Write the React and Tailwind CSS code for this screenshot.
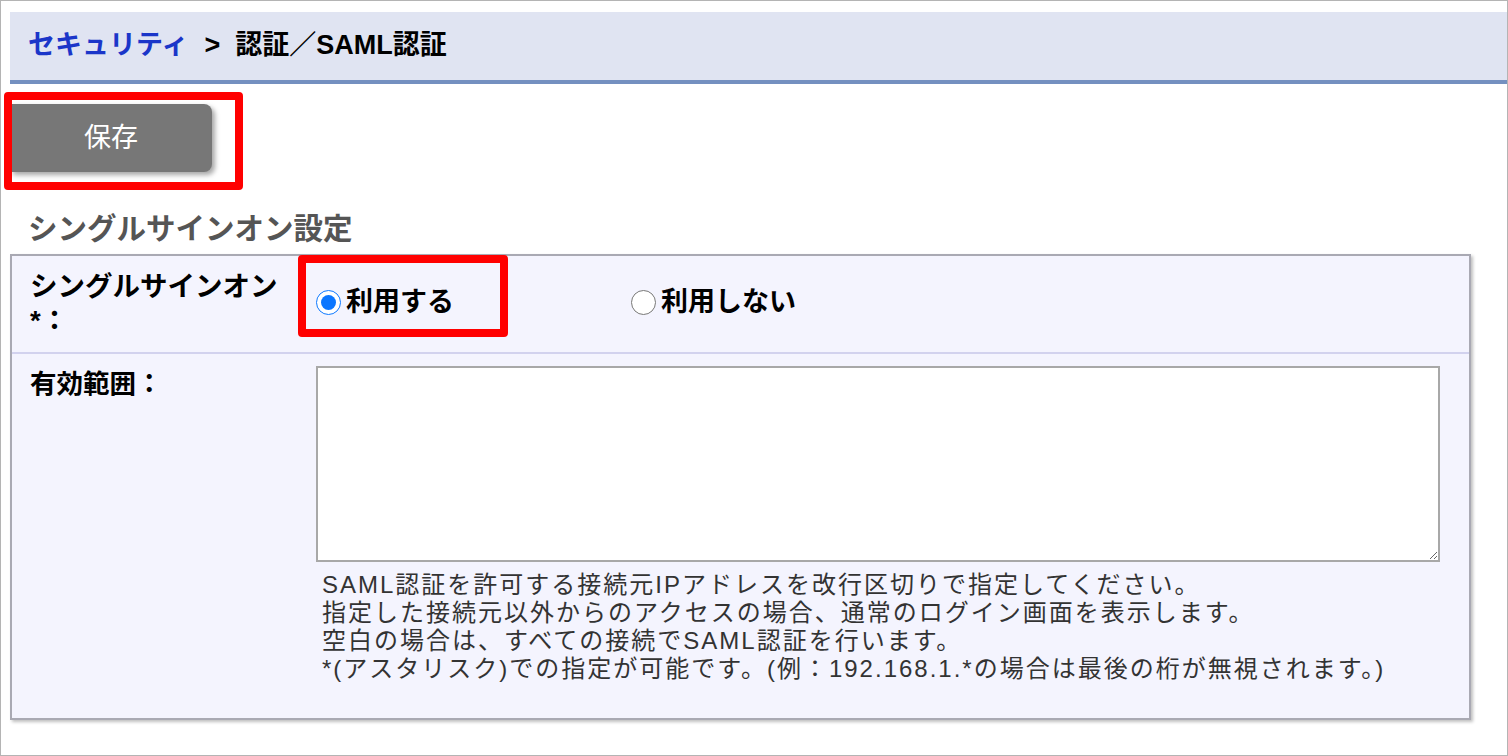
import { useState } from 'react'

const jp = { fontFamily: '"Liberation Sans", "Noto Sans CJK JP", sans-serif' }

export default function App() {
  const [sso, setSso] = useState('on')
  const [range, setRange] = useState('')

  return (
    <div style={jp} className="h-[756px] w-[1508px] overflow-hidden border border-[#b4b4b4] bg-white pl-[9px] pt-[11px] text-black">
      {/* breadcrumb bar */}
      <div className="flex h-[72px] items-center border-b-4 border-[#7490c0] bg-[#e0e4f2] pb-[2px] pl-[18px] text-[27px] font-bold">
        <a href="#" className="text-[#1b36c9]">セキュリティ</a>
        <span className="ml-[16px]">&gt;</span>
        <span className="ml-[15px]">認証／SAML認証</span>
      </div>

      {/* save */}
      <div className="relative mt-[20px] h-[68px] w-[202px]">
        <button className="h-full w-full rounded-r-lg bg-[#777777] text-[27px] text-white shadow-[3px_3px_5px_rgba(0,0,0,0.35)]">
          保存
        </button>
        <div className="pointer-events-none absolute -left-[6px] -top-[12px] h-[98px] w-[239px] rounded-[4px] border-[8px] border-[#ff0000]" />
      </div>

      <h2 className="mt-[37px] pl-[18px] text-[29.5px] font-bold leading-[40px] text-[#555555]">シングルサインオン設定</h2>

      {/* settings table */}
      <div className="mt-[5px] w-[1461px] border-2 border-[#a9a9b3] bg-[#f4f4fe] shadow-[2px_2px_3px_rgba(0,0,0,0.25)]">
        <div className="flex h-[98px] border-b-2 border-[#d2d2ee]">
          <div className="w-[304px] shrink-0 pl-[18px] pt-[14px] text-[27.5px] font-bold leading-[34px]">
            シングルサインオン
            <br />
            *：
          </div>
          <div className="flex items-start pt-[26px]">
            <label className="relative flex w-[315px] items-center text-[27px] font-bold">
              <input
                type="radio"
                name="sso"
                checked={sso === 'on'}
                onChange={() => setSso('on')}
                className="m-0 mr-[5px] h-[25px] w-[25px] accent-[#0b76ff]"
              />
              利用する
              <span className="pointer-events-none absolute -left-[18px] -top-[27px] h-[82px] w-[210px] rounded-[4px] border-[8px] border-[#ff0000]" />
            </label>
            <label className="flex items-center text-[27px] font-bold">
              <input
                type="radio"
                name="sso"
                checked={sso === 'off'}
                onChange={() => setSso('off')}
                className="m-0 mr-[5px] h-[25px] w-[25px]"
              />
              利用しない
            </label>
          </div>
        </div>

        <div className="flex h-[364px]">
          <div className="w-[304px] shrink-0 pl-[18px] pt-[13px] text-[26.5px] font-bold leading-[34px]">有効範囲：</div>
          <div className="pt-[12px]">
            <textarea
              value={range}
              onChange={e => setRange(e.target.value)}
              className="block h-[196px] w-[1124px] border-2 border-[#a8a8a8] bg-white p-2 text-[22px] outline-none"
            />
            <div className="mt-[9px] pl-[6px] text-[24px] leading-[28px] tracking-[2px] text-[#333333]">
              <p>SAML認証を許可する接続元IPアドレスを改行区切りで指定してください。</p>
              <p>指定した接続元以外からのアクセスの場合、通常のログイン画面を表示します。</p>
              <p>空白の場合は、すべての接続でSAML認証を行います。</p>
              <p>*(アスタリスク)での指定が可能です。(例：192.168.1.*の場合は最後の桁が無視されます。)</p>
            </div>
          </div>
        </div>
      </div>
    </div>
  )
}
